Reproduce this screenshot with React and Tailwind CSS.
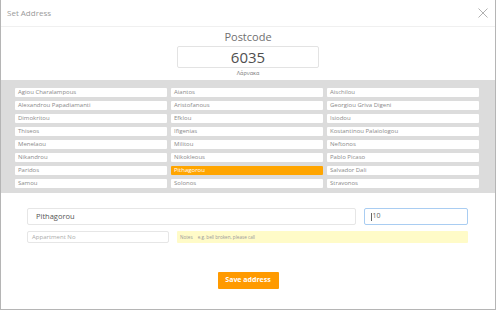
import React from 'react'

const streets = [
  'Agiou Charalampous', 'Aiantos', 'Aischilou',
  'Alexandrou Papadiamanti', 'Aristofanous', 'Georgiou Griva Digeni',
  'Dimokritou', 'Efklou', 'Isiodou',
  'Thiseos', 'Ifigenias', 'Kostantinou Palaiologou',
  'Menelaou', 'Militou', 'Neftonos',
  'Nikandrou', 'Nikokleous', 'Pablo Picaso',
  'Paridos', 'Pithagorou', 'Salvador Dali',
  'Samou', 'Solonos', 'Stravonos',
]

export default function App() {
  const selected = 'Pithagorou'
  return (
    <div className="w-[496px] h-[310px] bg-white border-l border-r border-b border-[#b5b5b5] flex flex-col" style={{ fontFamily: '"Open Sans", sans-serif' }}>
      <div className="h-[27px] flex items-center justify-between pl-[6px] pr-[7px] border-b border-[#f0f0f0]">
        <span className="text-[8px] text-[#9a9a9a]">Set Address</span>
        <svg width="10" height="10" viewBox="0 0 10 10" className="text-[#a8a8a8]">
          <path d="M0.5 0.5 L9.5 9.5 M9.5 0.5 L0.5 9.5" stroke="currentColor" strokeWidth="0.9" fill="none" />
        </svg>
      </div>

      <div className="flex flex-col items-center pt-[2px]">
        <div className="text-[11px] leading-[16px] text-[#707070]">Postcode</div>
        <div className="mt-[1px] w-[142px] h-[22px] border border-[#e3e3e3] rounded-[2px] flex items-center justify-center text-[15px] text-[#4f4f4f]">6035</div>
        <div className="text-[5.5px] leading-[10px] text-[#777]">Λάρνακα</div>
      </div>

      <div className="mt-[2px] bg-[#dcdcdc] pl-[14px] pr-[16px] pt-[8px] pb-[5px] grid grid-cols-3 gap-x-[4px] gap-y-[4px]">
        {streets.map((s) => (
          <div
            key={s}
            className={
              s === selected
                ? 'h-[9px] bg-[#ffa500] text-white text-[6px] leading-[9px] pl-[3px] rounded-[1px]'
                : 'h-[9px] bg-white text-[#8a8a8a] text-[6px] leading-[9px] pl-[3px] rounded-[1px]'
            }
          >
            {s}
          </div>
        ))}
      </div>

      <div className="pl-[26px] pr-[27px] pt-[15px] flex flex-col gap-[6px]">
        <div className="flex gap-[8px]">
          <div className="w-[329px] h-[17px] border border-[#e6e6e6] rounded-[2px] flex items-center pl-[8px] text-[7.5px] text-[#555]">Pithagorou</div>
          <div className="flex-1 h-[17px] border border-[#a9cdf2] rounded-[2px] flex items-center pl-[6px] text-[7px] text-[#666]">
            <span className="w-[0.5px] h-[8px] bg-[#666] mr-[1px]" />10
          </div>
        </div>
        <div className="flex gap-[8px]">
          <div className="w-[142px] h-[12px] border border-[#e6e6e6] rounded-[2px] flex items-center pl-[4px] text-[6px] text-[#aaa]">Appartment No</div>
          <div className="flex-1 h-[12px] bg-[#fffbc8] rounded-[1px] flex items-center pl-[3px] text-[4.6px] text-[#999]">
            <span>Notes</span><span className="ml-[5px]">e.g. bell broken, please call</span>
          </div>
        </div>
      </div>

      <div className="flex justify-center mt-[29px]">
        <button className="w-[61px] h-[17px] bg-[#ff9a00] rounded-[1px] text-white text-[7px] font-bold">Save address</button>
      </div>
    </div>
  )
}
